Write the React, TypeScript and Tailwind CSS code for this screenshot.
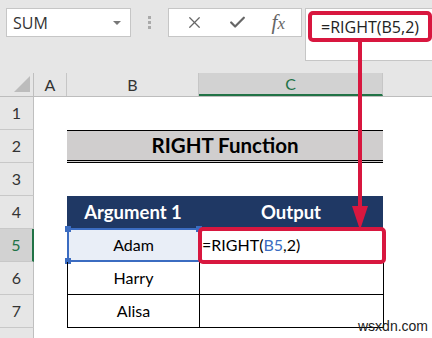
import { X, Check } from 'lucide-react';

const RED = '#d8173f';

const RowHead = ({ n, active }: { n?: number; active?: boolean }) => (
  <div
    className={
      active
        ? 'w-[34px] shrink-0 h-full flex items-center justify-center bg-[#d2d2d2] text-[#217346] border-r-2 border-r-[#217346] border-b border-b-[#c8c8c8] text-[16px]'
        : 'w-[34px] shrink-0 h-full flex items-center justify-center bg-[#e6e6e6] text-[#333] border-r border-r-[#bfbfbf] border-b border-b-[#c8c8c8] text-[16px]'
    }
  >
    {n}
  </div>
);

const DataRow = ({ n, name, formula, active }: { n: number; name: string; formula?: boolean; active?: boolean }) => (
  <div className="flex h-[33px]">
    <RowHead n={n} active={active} />
    <div className="w-[33px] shrink-0" />
    <div
      className={
        'relative w-[133px] shrink-0 flex items-center justify-center border-l border-r border-b border-black text-[16px] text-black ' +
        (active ? 'bg-[#e9eef7]' : '')
      }
    >
      {name}
      {active && (
        <>
          <div className="absolute -left-px -top-px -right-px -bottom-px border-2 border-[#3b6cc1]" />
          <div className="absolute -left-[3px] -top-[3px] w-[6px] h-[6px] bg-[#3b6cc1]" />
          <div className="absolute -right-[3px] -top-[3px] w-[6px] h-[6px] bg-[#3b6cc1]" />
          <div className="absolute -left-[3px] -bottom-[3px] w-[6px] h-[6px] bg-[#3b6cc1]" />
        </>
      )}
    </div>
    <div className="w-[184px] shrink-0 flex items-center border-r border-b border-black text-[16px] text-black pl-[2px]">
      {formula && (
        <span>
          =RIGHT(<span className="text-[#3b6cc1]">B5</span>,2)
        </span>
      )}
    </div>
    <div className="flex-1" />
  </div>
);

export default function App() {
  return (
    <div className="relative w-[432px] h-[338px] overflow-hidden bg-white font-['Lato',sans-serif]">
      {/* toolbar */}
      <div className="h-[73px] bg-[#e6e6e6] flex items-start pt-[8px] pl-[6px] font-['Open_Sans',sans-serif]">
        <div className="w-[127px] h-[29px] bg-white border border-[#c6c6c6] flex items-center justify-between pl-[6px] pr-[9px] text-[16px] text-[#333]">
          <span>SUM</span>
          <span className="w-0 h-0 border-l-[4px] border-r-[4px] border-t-[4px] border-l-transparent border-r-transparent border-t-[#777]" />
        </div>
        <div className="w-[38px] h-[29px] flex flex-col items-center justify-center gap-[2px]">
          <span className="w-[3px] h-[3px] bg-[#aaa]" />
          <span className="w-[3px] h-[3px] bg-[#aaa]" />
          <span className="w-[3px] h-[3px] bg-[#aaa]" />
        </div>
        <div className="w-[136px] h-[29px] bg-white border border-[#c6c6c6] flex items-center justify-around px-[4px] text-[#666]">
          <X size={19} strokeWidth={1.6} />
          <Check size={19} strokeWidth={2.8} />
          <span className="font-['Liberation_Serif',serif] italic text-[21px] leading-none">
            f<span className="text-[17px]">x</span>
          </span>
        </div>
        <div className="ml-[3px] flex-1 h-[53px] bg-white border border-[#c6c6c6] border-r-0 pl-[2px] pt-[2px]">
          <div
            className="inline-flex items-center h-[31px] px-[9px] border-[4px] rounded-[5px] text-[16px] text-[#222]"
            style={{ borderColor: RED }}
          >
            =RIGHT(B5,2)
          </div>
        </div>
      </div>

      {/* column headers */}
      <div className="flex h-[24px] bg-[#e6e6e6] border-b border-[#bdbdbd] text-[16px] text-[#333]">
        <div className="w-[34px] shrink-0 relative border-r border-[#bfbfbf]">
          <div className="absolute right-[3px] bottom-[4px] w-0 h-0" style={{ borderBottom: '16px solid #bcbcbc', borderLeft: '16px solid transparent' }} />
        </div>
        <div className="w-[33px] shrink-0 flex items-center justify-center border-r border-[#c6c6c6]">A</div>
        <div className="w-[132px] shrink-0 flex items-center justify-center border-r border-[#c6c6c6]">B</div>
        <div className="w-[184px] shrink-0 flex items-center justify-center bg-[#d2d2d2] text-[#217346] border-b-2 border-[#217346] border-r border-r-[#c6c6c6]">C</div>
        <div className="flex-1" />
      </div>

      {/* row 1 */}
      <div className="flex h-[33px]">
        <RowHead n={1} />
      </div>
      {/* row 2 */}
      <div className="flex h-[33px]">
        <RowHead n={2} />
        <div className="w-[33px] shrink-0" />
        <div className="w-[316px] shrink-0 flex items-center justify-center bg-[#d0cece] border-t border-black border-b-[3px] border-b-black border-double font-bold text-[20.5px] text-black">
          RIGHT Function
        </div>
      </div>
      {/* row 3 */}
      <div className="flex h-[33px]">
        <RowHead n={3} />
      </div>
      {/* row 4 */}
      <div className="flex h-[33px]">
        <RowHead n={4} />
        <div className="w-[33px] shrink-0" />
        <div className="w-[316px] shrink-0 flex bg-[#1f3864] text-white font-bold text-[18.5px]">
          <div className="w-[132px] flex items-center justify-center">Argument 1</div>
          <div className="flex-1 flex items-center justify-center">Output</div>
        </div>
      </div>
      <DataRow n={5} name="Adam" formula active />
      <DataRow n={6} name="Harry" />
      <DataRow n={7} name="Alisa" />
      <div className="flex h-[33px]">
        <RowHead />
      </div>

      {/* highlight box on C5 */}
      <div
        className="absolute left-[198px] top-[227px] w-[188px] h-[37px] border-[4px] rounded-[5px]"
        style={{ borderColor: RED }}
      />
      {/* arrow */}
      <svg className="absolute left-[350px] top-[40px]" width="20" height="192" viewBox="0 0 20 192">
        <line x1="10" y1="0" x2="10" y2="172" stroke={RED} strokeWidth="4" />
        <polygon points="2,166 18,166 10,190" fill={RED} />
      </svg>

      <div className="absolute left-[358px] top-[316px] text-[14px] text-[#222] font-['Liberation_Sans',sans-serif]">
        wsxdn.com
      </div>
    </div>
  );
}
